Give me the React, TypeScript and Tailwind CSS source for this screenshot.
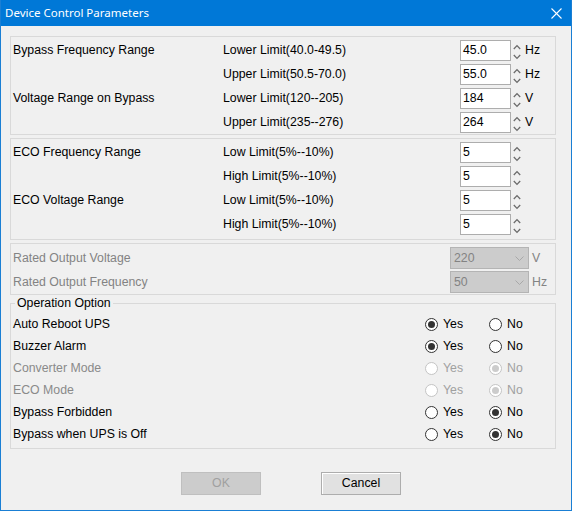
import React from "react";

function Spinner() {
  return (
    <svg width="8" height="21" viewBox="0 0 8 21" className="shrink-0">
      <polyline points="0.8,9 4,5.6 7.2,9" fill="none" stroke="#6b6b6b" strokeWidth="1.3" />
      <polyline points="0.8,15 4,18.4 7.2,15" fill="none" stroke="#6b6b6b" strokeWidth="1.3" />
    </svg>
  );
}

function NumRow({ label, sub, value, unit }: { label?: string; sub: string; value: string; unit?: string }) {
  return (
    <div className="flex h-[24px] items-center">
      <div className="w-[212px] pl-[2px]">{label ?? ""}</div>
      <div className="w-[237px]">{sub}</div>
      <div className="flex h-[21px] w-[51px] items-center border border-[#adadad] bg-white pl-[2px] text-black">{value}</div>
      <div className="ml-[2px] flex items-center">
        <Spinner />
      </div>
      {unit ? <div className="ml-[4px]">{unit}</div> : null}
    </div>
  );
}

function DropRow({ label, value, unit }: { label: string; value: string; unit: string }) {
  return (
    <div className="flex h-[24px] items-center text-[#838383]">
      <div className="w-[439px] pl-[2px]">{label}</div>
      <div className="flex h-[22px] w-[79px] items-center justify-between border border-[#b4b4b4] bg-[#cccccc] pl-[3px] pr-[4px]">
        <span>{value}</span>
        <svg width="9" height="5" viewBox="0 0 9 5">
          <polyline points="0.5,0.5 4.5,4.5 8.5,0.5" fill="none" stroke="#a8a8a8" strokeWidth="1" />
        </svg>
      </div>
      <div className="ml-[3px]">{unit}</div>
    </div>
  );
}

function Radio({ checked, disabled, label }: { checked: boolean; disabled?: boolean; label: string }) {
  return (
    <div className="flex w-[64px] items-center">
      <div
        className={
          "flex h-[13px] w-[13px] items-center justify-center rounded-full border bg-white " +
          (disabled ? "border-[#c4c4c4]" : "border-[#333333]")
        }
      >
        {checked ? (
          <div className={"h-[7px] w-[7px] rounded-full " + (disabled ? "bg-[#cccccc]" : "bg-[#333333]")} />
        ) : null}
      </div>
      <span className={"ml-[5px] " + (disabled ? "text-[#a0a0a0]" : "text-black")}>{label}</span>
    </div>
  );
}

function OptRow({ label, yes, disabled }: { label: string; yes: boolean; disabled?: boolean }) {
  return (
    <div className="flex h-[22px] items-center">
      <div className={"w-[414px] pl-[2px] " + (disabled ? "text-[#8a8a8a]" : "text-black")}>{label}</div>
      <Radio checked={yes} disabled={disabled} label="Yes" />
      <Radio checked={!yes} disabled={disabled} label="No" />
    </div>
  );
}

export default function App() {
  return (
    <div className="flex h-[511px] w-[572px] flex-col bg-[#1a7fd4] px-[1px] pb-[1px] font-['Liberation_Sans',Arial,sans-serif] text-[12.3px] text-black">
      <div className="flex h-[26px] shrink-0 items-center justify-between bg-[#0078d7] pl-[4px] pr-[9px] text-white">
        <span className="font-['Noto_Sans',sans-serif] text-[11.5px]">Device Control Parameters</span>
        <svg width="11" height="11" viewBox="0 0 11 11">
          <line x1="0.5" y1="0.5" x2="10.5" y2="10.5" stroke="white" strokeWidth="1.1" />
          <line x1="10.5" y1="0.5" x2="0.5" y2="10.5" stroke="white" strokeWidth="1.1" />
        </svg>
      </div>
      <div className="flex flex-1 flex-col bg-[#f0f0f0] pl-[9px] pt-[10px]">
        <div className="w-[546px] border border-[#d9d9d9] pt-[1px]">
          <NumRow label="Bypass Frequency Range" sub="Lower Limit(40.0-49.5)" value="45.0" unit="Hz" />
          <NumRow sub="Upper Limit(50.5-70.0)" value="55.0" unit="Hz" />
          <NumRow label="Voltage Range on Bypass" sub="Lower Limit(120--205)" value="184" unit="V" />
          <NumRow sub="Upper Limit(235--276)" value="264" unit="V" />
        </div>
        <div className="mt-[3px] w-[546px] border border-[#d9d9d9] pb-[3px] pt-[1px]">
          <NumRow label="ECO Frequency Range" sub="Low Limit(5%--10%)" value="5" />
          <NumRow sub="High Limit(5%--10%)" value="5" />
          <NumRow label="ECO Voltage Range" sub="Low Limit(5%--10%)" value="5" />
          <NumRow sub="High Limit(5%--10%)" value="5" />
        </div>
        <div className="mt-[3px] w-[546px] border border-[#d9d9d9] pt-[2px]">
          <DropRow label="Rated Output Voltage" value="220" unit="V" />
          <DropRow label="Rated Output Frequency" value="50" unit="Hz" />
        </div>
        <div className="relative mt-[8px] w-[546px] border border-[#d9d9d9] pb-[3px] pt-[9px]">
          <div className="absolute left-[4px] top-[-8px] bg-[#f0f0f0] px-[2px] leading-[14px]">Operation Option</div>
          <OptRow label="Auto Reboot UPS" yes={true} />
          <OptRow label="Buzzer Alarm" yes={true} />
          <OptRow label="Converter Mode" yes={false} disabled />
          <OptRow label="ECO Mode" yes={false} disabled />
          <OptRow label="Bypass Forbidden" yes={false} />
          <OptRow label="Bypass when UPS is Off" yes={false} />
        </div>
        <div className="mt-[23px] flex gap-[60px] pl-[171px]">
          <div className="flex h-[23px] w-[80px] items-center justify-center border border-[#bfbfbf] bg-[#cccccc] text-[#a0a0a0]">OK</div>
          <div className="flex h-[23px] w-[80px] items-center justify-center border border-[#adadad] bg-[#e1e1e1] text-black shadow-[inset_1px_1px_0_#ffffff]">Cancel</div>
        </div>
      </div>
    </div>
  );
}
